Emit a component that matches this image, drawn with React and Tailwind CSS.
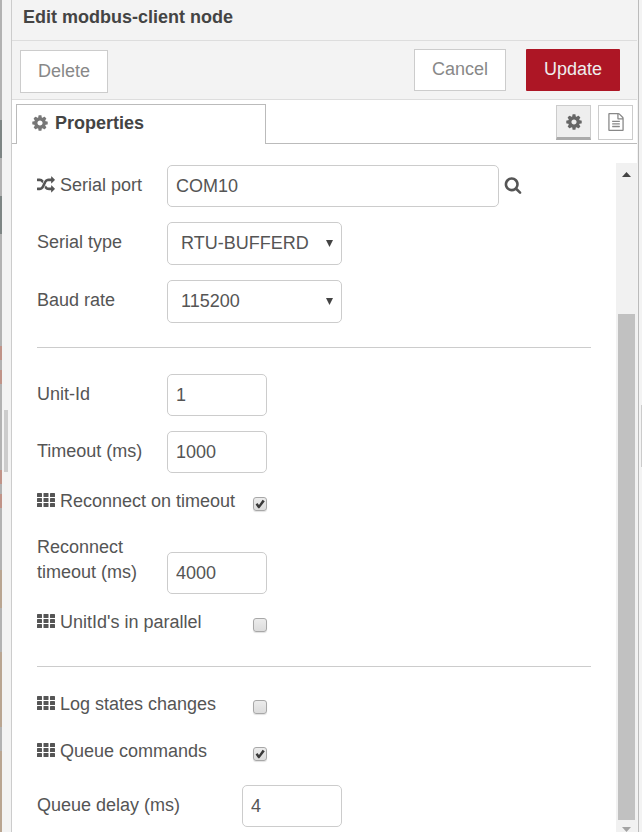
import React from "react";

const PATHS = {
  cog: "M1152 896q0-106-75-181t-181-75-181 75-75 181 75 181 181 75 181-75 75-181zm512-109v222q0 12-8 23t-20 13l-185 28q-19 54-39 91 35 50 107 138 10 12 10 25t-9 23q-27 37-99 108t-94 71q-12 0-26-9l-138-108q-44 23-91 38-16 136-29 186-7 28-36 28h-222q-14 0-24.5-8.5t-11.5-21.5l-28-184q-49-16-90-37l-141 107q-10 9-25 9-14 0-25-11-126-114-165-168-7-10-7-23 0-12 8-23 15-21 51-66.5t54-70.5q-27-50-41-99l-183-27q-13-2-21-12.5t-8-23.5v-222q0-12 8-23t19-13l186-28q14-46 39-92-40-57-107-138-10-12-10-24 0-10 9-23 26-36 98.5-107.5t94.5-71.5q13 0 26 10l138 107q44-23 91-38 16-136 29-186 7-28 36-28h222q14 0 24.5 8.5t11.5 21.5l28 184q49 16 90 37l142-107q9-9 24-9 13 0 25 10 129 119 165 170 7 8 7 22 0 12-8 23-15 21-51 66.5t-54 70.5q26 50 41 98l183 28q13 2 21 12.5t8 23.5z",
  search: "M1216 832q0-185-131.5-316.5t-316.5-131.5-316.5 131.5-131.5 316.5 131.5 316.5 316.5 131.5 316.5-131.5 131.5-316.5zm512 832q0 52-38 90t-90 38q-54 0-90-38l-343-342q-179 124-399 124-143 0-273.5-55.5t-225-150-150-225-55.5-273.5 55.5-273.5 150-225 225-150 273.5-55.5 273.5 55.5 225 150 150 225 55.5 273.5q0 220-124 399l343 343q37 37 37 90z",
  file: "M1596 380q28 28 48 76t20 88v1152q0 40-28 68t-68 28h-1344q-40 0-68-28t-28-68v-1600q0-40 28-68t68-28h896q40 0 88 20t76 48zm-444-244v376h376q-10-29-22-41l-313-313q-12-12-41-22zm384 1528v-1024h-416q-40 0-68-28t-28-68v-416h-768v1536h1280zm-1024-864q0-14 9-23t23-9h704q14 0 23 9t9 23v64q0 14-9 23t-23 9h-704q-14 0-23-9t-9-23v-64zm736 224q14 0 23 9t9 23v64q0 14-9 23t-23 9h-704q-14 0-23-9t-9-23v-64q0-14 9-23t23-9h704zm0 256q14 0 23 9t9 23v64q0 14-9 23t-23 9h-704q-14 0-23-9t-9-23v-64q0-14 9-23t23-9h704z",
  random: "M666 481q-60 92-137 273-22-45-37-72.5t-40.5-63.5-51-56.5-63-35-81.5-14.5h-224q-14 0-23-9t-9-23v-192q0-14 9-23t23-9h224q250 0 410 225zm1126 799q0 14-9 23l-320 320q-9 9-23 9-13 0-22.5-9.5t-9.5-22.5v-192q-32 0-85 .5t-81 1-73-1-71-5-64-10.5-63-18.5-58-28.5-59-40-55-53.5-56-69.5q59-93 136-273 22 45 37 72.5t40.5 63.5 51 56.5 63 35 81.5 14.5h256v-192q0-14 9-23t23-9q12 0 24 10l319 319q9 9 9 23zm0-896q0 14-9 23l-320 320q-9 9-23 9-13 0-22.5-9.5t-9.5-22.5v-192h-256q-48 0-87 15t-69 45-51 61.5-45 77.5q-32 62-78 171-29 66-49.5 111t-54 105-64 100-74 83-90 68.5-106.5 42-128 16.5h-224q-14 0-23-9t-9-23v-192q0-14 9-23t23-9h224q48 0 87-15t69-45 51-61.5 45-77.5q32-62 78-171 29-66 49.5-111t54-105 64-100 74-83 90-68.5 106.5-42 128-16.5h256v-192q0-14 9-23t23-9q12 0 24 10l319 319q9 9 9 23z",
};

function Icon({ name, className }) {
  return (
    <svg viewBox="0 0 1792 1792" fill="currentColor" className={className} aria-hidden="true">
      <path d={PATHS[name]} />
    </svg>
  );
}

function GridIcon() {
  return (
    <svg viewBox="0 0 18 18" fill="currentColor" className="h-[18px] w-[18px] shrink-0" aria-hidden="true">
      {[0, 5, 10].map((y) =>
        [0, 6.5, 13].map((x) => (
          <rect key={x + "-" + y} x={x} y={y} width="5" height="4" rx="0.6" />
        ))
      )}
    </svg>
  );
}

function TextField({ id, label, icon, value, labelClass = "w-[130px]", inputClass = "w-[100px]", children }) {
  return (
    <div className="flex items-center">
      <label htmlFor={id} className={"flex shrink-0 items-center gap-[5px] pb-[2px] " + labelClass}>
        {icon}
        {label}
      </label>
      <input
        id={id}
        type="text"
        defaultValue={value}
        className={"h-[42px] rounded-[5px] border border-[#ccc] bg-white px-2 outline-none " + inputClass}
      />
      {children}
    </div>
  );
}

function SelectField({ id, label, value }) {
  return (
    <div className="flex items-center">
      <label htmlFor={id} className="w-[130px] shrink-0 pb-[2px]">{label}</label>
      <div className="relative w-[175px]">
        <select
          id={id}
          defaultValue={value}
          className="block h-[43px] w-full appearance-none rounded-[5px] border border-[#ccc] bg-white pr-6 pb-px pl-[13px] outline-none"
        >
          <option>{value}</option>
        </select>
        <svg viewBox="0 0 7 7" fill="#444" className="pointer-events-none absolute top-[18px] right-[9px] h-[7px] w-[7px]" aria-hidden="true">
          <path d="M0 0h7L3.5 7z" />
        </svg>
      </div>
    </div>
  );
}

function CheckField({ id, label, checked }) {
  return (
    <div className="flex h-[25px] items-center">
      <label htmlFor={id} className="flex w-[216px] shrink-0 items-center gap-[5px] pt-[2px]">
        <GridIcon />
        {label}
      </label>
      <span className="mt-[6px] grid h-[14px] w-[14px]">
        <input
          id={id}
          type="checkbox"
          defaultChecked={checked}
          className="peer col-start-1 row-start-1 h-[14px] w-[14px] appearance-none rounded-[3px] border border-[#a8a8a8] bg-linear-to-b from-[#ececec] to-[#dcdcdc] shadow-[0_1px_1px_rgba(0,0,0,0.12)]"
        />
        <svg viewBox="0 0 14 14" className="pointer-events-none invisible col-start-1 row-start-1 peer-checked:visible" aria-hidden="true">
          <path d="M2.6 7.6L4.4 6L6 7.9L9.6 2.8L11.8 4.2L6.4 11.2H5.2z" fill="#3a3a3a" />
        </svg>
      </span>
    </div>
  );
}

export default function App() {
  return (
    <div className="flex h-screen overflow-hidden bg-[#f3f3f3] font-['Liberation_Sans',Arial,sans-serif] text-lg leading-[25px] text-[#555]">
      <div className="flex w-[2px] shrink-0 flex-col bg-[#b2b2b2]">
        <div className="mt-[120px] h-[38px] bg-[#7d8584]" />
        <div className="mt-[38px] h-[38px] bg-[#7d8584]" />
        <div className="mt-[112px] h-[14px] bg-[#c09388]" />
        <div className="mt-[10px] h-[14px] bg-[#c09388]" />
        <div className="mt-[86px] h-[14px] bg-[#c09388]" />
        <div className="mt-[10px] h-[14px] bg-[#c09388]" />
        <div className="mt-[62px] h-[38px] bg-[#b9a591]" />
        <div className="mt-[44px] h-[75px] bg-[#b9a591]" />
        <div className="mt-[24px] flex-1 bg-[#b9a591]" />
      </div>
      <div className="flex w-[9px] shrink-0 items-center pt-[50px] pl-[2px]">
        <div className="h-[62px] w-1 bg-[#ccc]" />
      </div>

      <section className="mr-px flex min-w-0 flex-1 flex-col border-l border-[#ccc] bg-white">
        <header className="h-[41px] shrink-0 border-b border-[#ddd] bg-[#f3f3f3] px-[11px] pt-[5px]">
          <h1 className="font-bold text-[#444]">Edit modbus-client node</h1>
        </header>

        <div className="flex h-[59px] shrink-0 items-center justify-between border-b border-[#ddd] bg-[#f3f3f3] pt-[2px] pr-[17px] pl-2">
          <button className="h-[43px] w-[88px] border border-[#ccc] bg-white text-[#888]">Delete</button>
          <div className="flex gap-5 pb-[3px]">
            <button className="h-[42px] w-[92px] border border-[#ccc] bg-white text-[#888]">Cancel</button>
            <button className="h-[42px] w-[94px] rounded-[1px] bg-[#ad1625] text-[#eee]">Update</button>
          </div>
        </div>

        <div className="flex h-[44px] shrink-0 items-stretch pt-1">
          <div className="w-1 border-b border-[#bbb]" />
          <button className="flex w-[250px] items-center gap-[6px] border border-b-0 border-[#bbb] bg-white pb-[3px] pl-[14px] font-bold text-[#444]">
            <Icon name="cog" className="h-[18px] w-[18px] text-[#777]" />
            Properties
          </button>
          <div className="flex flex-1 justify-end gap-[7px] border-b border-[#bbb] pt-px pr-1">
            <button aria-label="Properties" className="flex h-[35px] w-[35px] items-center justify-center border border-b-3 border-[#ccc] border-b-[#aaa] bg-[#eee] text-[#666]">
              <Icon name="cog" className="h-[18px] w-[18px]" />
            </button>
            <button aria-label="Description" className="flex h-[35px] w-[35px] items-center justify-center border border-[#ccc] bg-white pb-px text-[#888]">
              <Icon name="file" className="h-[18px] w-[18px]" />
            </button>
          </div>
        </div>

        <div className="flex min-h-0 flex-1 pt-[19px]">
          <form className="min-w-0 flex-1 overflow-hidden px-[25px]">
            <div className="flex flex-col gap-[15px] pt-[2px]">
              <TextField
                id="serial-port"
                label="Serial port"
                icon={<Icon name="random" className="h-[18px] w-[18px] shrink-0" />}
                value="COM10"
                inputClass="min-w-0 max-w-[332px] flex-1"
              >
                <button type="button" aria-label="Search ports" className="ml-[5px] pb-[2px]">
                  <Icon name="search" className="h-[18px] w-[18px]" />
                </button>
              </TextField>
              <SelectField id="serial-type" label="Serial type" value="RTU-BUFFERD" />
              <SelectField id="baud-rate" label="Baud rate" value="115200" />
            </div>
            <hr className="mt-6 mb-[26px] border-[#ccc]" />
            <div className="flex flex-col gap-[15px]">
              <TextField id="unit-id" label="Unit-Id" value="1" />
              <TextField id="timeout" label="Timeout (ms)" value="1000" />
              <CheckField id="reconnect" label="Reconnect on timeout" checked />
              <div className="flex items-end pt-[7px]">
                <label htmlFor="reconnect-timeout" className="w-[130px] shrink-0 pr-4 pb-[9px]">
                  Reconnect timeout (ms)
                </label>
                <input
                  id="reconnect-timeout"
                  type="text"
                  defaultValue="4000"
                  className="h-[42px] w-[100px] rounded-[5px] border border-[#ccc] bg-white px-2 outline-none"
                />
              </div>
              <CheckField id="parallel" label="UnitId's in parallel" />
            </div>
            <hr className="mt-8 mb-6 border-[#ccc]" />
            <div className="flex flex-col gap-[22px]">
              <CheckField id="log-states" label="Log states changes" />
              <CheckField id="queue" label="Queue commands" checked />
              <TextField id="queue-delay" label="Queue delay (ms)" value="4" labelClass="w-[205px]" />
            </div>
          </form>
          <div className="flex w-[21px] shrink-0 flex-col items-center bg-[#f1f1f1]" aria-hidden="true">
            <svg viewBox="0 0 9 5" className="mt-[9px] h-[5px] w-[9px] shrink-0" fill="#444">
              <path d="M4.5 0L9 5H0z" />
            </svg>
            <div className="mt-[137px] mb-[7px] w-[17px] flex-1 bg-[#c1c1c1]" />
            <svg viewBox="0 0 9 5" className="h-[5px] w-[9px] shrink-0" fill="#a3a3a3">
              <path d="M4.5 5L9 0H0z" />
            </svg>
          </div>
        </div>
      </section>
      <div className="flex w-1 shrink-0 items-center justify-end border-l border-[#bbb] pt-[39px]">
        <div className="h-[62px] w-px bg-[#ccc]" />
      </div>
    </div>
  );
}
